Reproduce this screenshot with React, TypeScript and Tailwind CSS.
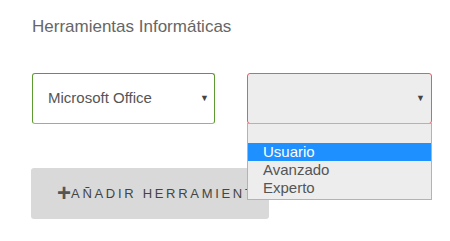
export default function App() {
  const options = ['Usuario', 'Avanzado', 'Experto']

  return (
    <div className="w-[450px] h-[241px] bg-white relative overflow-hidden" style={{ fontFamily: '"Liberation Sans", Arial, sans-serif' }}>
      <div className="pl-[32px] pt-[17px]">
        <h2 className="text-[17px] leading-[20px] text-[#666]">Herramientas Informáticas</h2>

        <div className="flex gap-[32px] mt-[36px]">
          {/* Tool select */}
          <div className="w-[183px] h-[51px] rounded-[3px] border border-[#5d9b32] border-b-[#8fbb6c] flex items-center pl-[15px] pr-[5px]">
            <span className="flex-1 text-[15px] text-[#555]">Microsoft Office</span>
            <span className="text-[9px] text-[#444]">▼</span>
          </div>

          {/* Level select (open) */}
          <div className="relative w-[185px]">
            <div className="h-[51px] rounded-[3px] border border-[#e65c66] bg-[#ededed] flex items-center justify-end pr-[6px]">
              <span className="text-[9px] text-[#444]">▼</span>
            </div>
            <div className="absolute left-0 top-[50px] w-[185px] z-10 bg-[#ededed] border border-[#9fb5dc] pb-[2px]">
              <div className="h-[19px]" />
              {options.map((o, i) => (
                <div
                  key={o}
                  className={`h-[18px] leading-[18px] pl-[15px] text-[15px] ${i === 0 ? 'bg-[#1e90ff] text-white' : 'text-[#555]'}`}
                >
                  {o}
                </div>
              ))}
            </div>
          </div>
        </div>

        <div className="mt-[44px] w-[238px] h-[51px] -ml-[1px] rounded-[3px] bg-[#d9d9d9] flex items-center pl-[26px] whitespace-nowrap overflow-visible">
          <span className="text-[24px] leading-none text-[#555] font-bold mr-[0px] -mt-[1px]">+</span>
          <span className="text-[13px] tracking-[2.7px] text-[#444]">AÑADIR HERRAMIENTA</span>
        </div>
      </div>
    </div>
  )
}
